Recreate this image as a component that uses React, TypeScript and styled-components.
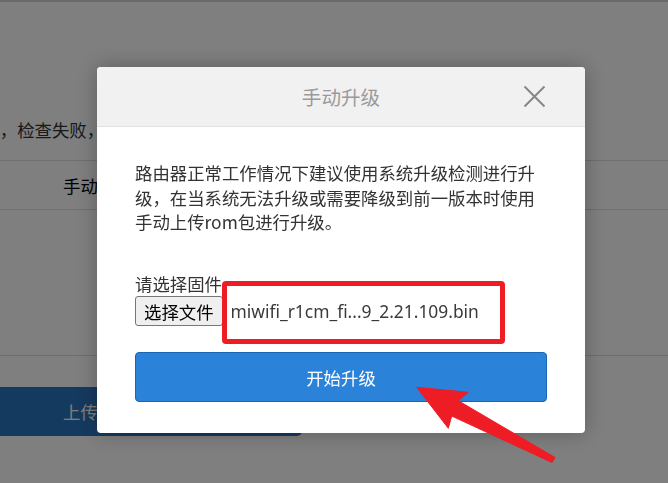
import React from "react";
import styled, { createGlobalStyle } from "styled-components";

const GlobalStyle = createGlobalStyle`
  html, body { margin: 0; padding: 0; }
  body {
    width: 668px;
    height: 483px;
    overflow: hidden;
    background: #ffffff;
    font-family: "Noto Sans CJK SC", "Microsoft YaHei", sans-serif;
  }
  * { box-sizing: border-box; }
`;

const FONT = 17.4;

/* ---------- underlying page ---------- */
const Page = styled.div`
  height: 483px;
  display: flex;
  flex-direction: column;
  overflow: hidden;
  background: #ffffff;
`;

const TopRule = styled.div`
  height: 2px;
  background: #d2d2d2;
`;

const StatusLine = styled.div`
  margin-top: 116px;
  margin-left: -35px;
  line-height: 24px;
  font-size: ${FONT}px;
  color: #333;
  white-space: nowrap;
`;

const LinkText = styled.span`
  color: #1aa3d9;
`;

const TabRow = styled.div`
  margin-top: 18px;
  height: 50px;
  border-top: 1px solid #dedede;
  border-bottom: 1px solid #dedede;
  display: flex;
  align-items: center;
  padding-left: 63px;
  font-size: ${FONT}px;
  color: #000;
`;

const Divider = styled.div`
  margin-top: 145px;
  height: 1px;
  background: #dcdcdc;
`;

const UploadBar = styled.div`
  margin-top: 31px;
  width: 302px;
  height: 49px;
  border-radius: 0 5px 5px 0;
  background: #2a74be;
  display: flex;
  align-items: center;
  padding-left: 63px;
  font-size: ${FONT}px;
  color: #ffffff;
`;

/* ---------- modal ---------- */
const Overlay = styled.div`
  position: fixed;
  inset: 0;
  background: rgba(0, 0, 0, 0.5);
  display: flex;
  align-items: flex-start;
  padding: 67px 0 0 97px;
`;

const Dialog = styled.div`
  width: 488px;
  background: #ffffff;
  border-radius: 4px;
  box-shadow: 0 0 22px rgba(0, 0, 0, 0.28);
`;

const Header = styled.div`
  height: 60px;
  background: #f1f1f1;
  border-bottom: 1px solid #e2e2e2;
  border-radius: 4px 4px 0 0;
  display: grid;
  grid-template-columns: 1fr auto 1fr;
  align-items: center;
`;

const Title = styled.div`
  grid-column: 2;
  font-size: 19.6px;
  color: #9a9a9a;
  line-height: 1;
`;

const CloseButton = styled.button`
  grid-column: 3;
  justify-self: end;
  margin-right: 39px;
  width: 23px;
  height: 23px;
  padding: 0;
  border: 0;
  background: transparent;
  display: flex;
  align-items: center;
  justify-content: center;
`;

const Body = styled.div`
  padding: 34px 38px 31px;
  font-size: ${FONT}px;
  color: #333;
`;

const Intro = styled.p`
  margin: 0 0 37px;
  line-height: 24.5px;
`;

const FieldLabel = styled.label`
  display: block;
  line-height: 24.5px;
  color: #333;
`;

const FileRow = styled.div`
  position: relative;
  height: 30px;
  display: flex;
  align-items: center;
  gap: 8px;
`;

const FileButton = styled.span`
  height: 30px;
  padding: 0 8px;
  border: 1px solid #777;
  border-radius: 3px;
  background: #efefef;
  color: #000;
  font-size: ${FONT}px;
  display: flex;
  align-items: center;
`;

const FileName = styled.span`
  font-family: "Noto Sans", "Noto Sans CJK SC", sans-serif;
  font-size: ${FONT}px;
  color: #3a3a3a;
  white-space: nowrap;
`;

const Highlight = styled.div`
  position: absolute;
  left: 87px;
  top: -15px;
  width: 283px;
  height: 63px;
  border: 5.5px solid #ee1c25;
  border-radius: 4px;
  pointer-events: none;
`;

const PrimaryButton = styled.button`
  margin-top: 26px;
  width: 100%;
  height: 50px;
  border: 1px solid #1b66b4;
  border-radius: 4px;
  background: #2b82d9;
  color: #ffffff;
  font-family: "Noto Sans CJK SC", sans-serif;
  font-size: ${FONT}px;
  padding: 0;
`;

const Annotation = styled.svg`
  position: fixed;
  left: 0;
  top: 0;
  width: 668px;
  height: 483px;
  pointer-events: none;
`;

export default function App() {
  return (
    <>
      <GlobalStyle />
      <Page>
        <TopRule />
        <StatusLine>
          <LinkText>检测</LinkText>，检查失败，请稍后重试
        </StatusLine>
        <TabRow>手动升级</TabRow>
        <Divider />
        <UploadBar>上传并升级</UploadBar>
      </Page>

      <Overlay>
        <Dialog>
          <Header>
            <Title>手动升级</Title>
            <CloseButton aria-label="关闭">
              <svg width="23" height="23" viewBox="0 0 23 23">
                <path
                  d="M1.5 1.5 L21.5 21.5 M21.5 1.5 L1.5 21.5"
                  stroke="#878787"
                  strokeWidth="2"
                  fill="none"
                />
              </svg>
            </CloseButton>
          </Header>
          <Body>
            <Intro>
              路由器正常工作情况下建议使用系统升级检测进行升级，在当系统无法升级或需要降级到前一版本时使用手动上传rom包进行升级。
            </Intro>
            <FieldLabel>请选择固件</FieldLabel>
            <FileRow>
              <FileButton>选择文件</FileButton>
              <FileName>miwifi_r1cm_fi...9_2.21.109.bin</FileName>
              <Highlight />
            </FileRow>
            <PrimaryButton>开始升级</PrimaryButton>
          </Body>
        </Dialog>
      </Overlay>

      <Annotation viewBox="0 0 668 483">
        <polygon
          points="416.7,387.3 468.3,392.3 458.3,400.7 555,457.5 552,462.5 451.7,416 448.3,428.3"
          fill="#ee1c25"
          stroke="#ee1c25"
          strokeWidth="1"
          strokeLinejoin="round"
        />
      </Annotation>
    </>
  );
}
